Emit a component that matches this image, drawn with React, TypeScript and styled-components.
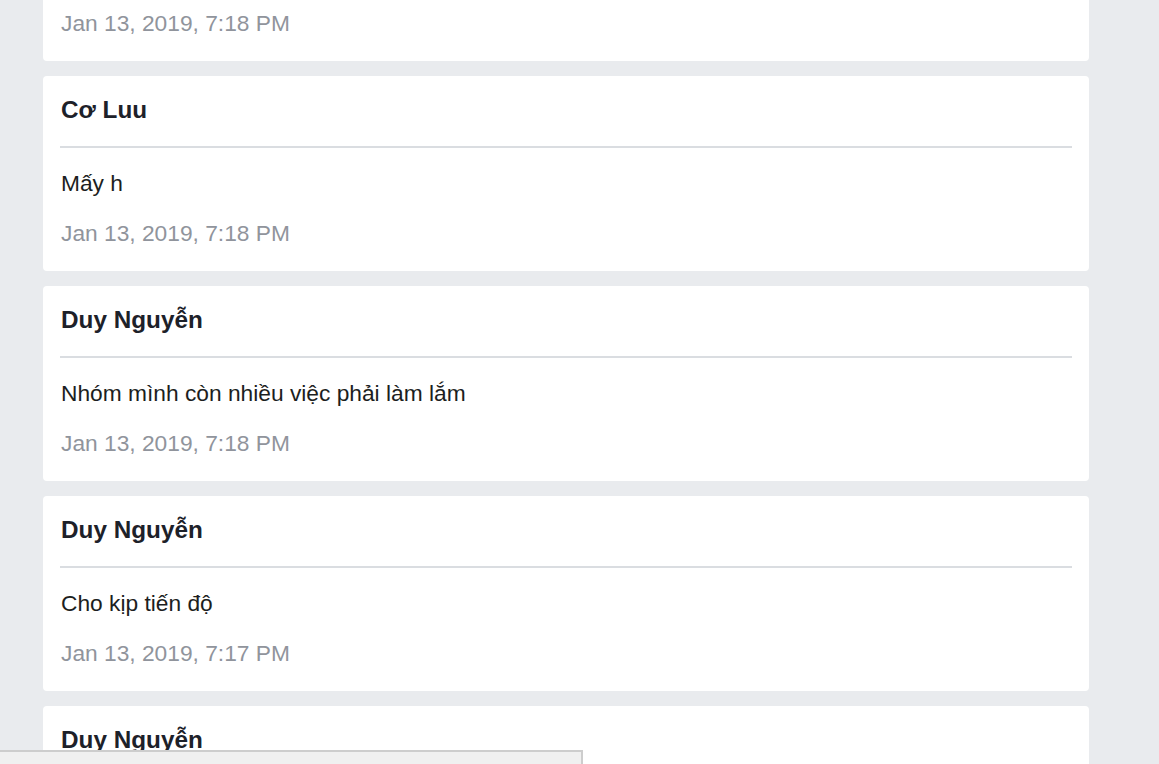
import React from "react";
import styled, { createGlobalStyle } from "styled-components";

const Global = createGlobalStyle`
  html, body {
    margin: 0;
    padding: 0;
    background: #e9ebee;
    font-family: "Liberation Sans", Arial, sans-serif;
    overflow: hidden;
  }
`;

const Page = styled.div`
  min-height: 764px;
  padding-left: 43px;
  background: #e9ebee;
`;

const Feed = styled.div`
  width: 1046px;
  margin-top: -134px;
  display: flex;
  flex-direction: column;
  gap: 15px;
`;

const Card = styled.div`
  background: #ffffff;
  border-radius: 4px;
  padding: 19px 17px 25px;
  display: flex;
  flex-direction: column;
`;

const Author = styled.div`
  font-size: 24.3px;
  line-height: 29px;
  font-weight: bold;
  color: #1d2129;
  padding-left: 1px;
`;

const Divider = styled.div`
  height: 2px;
  background: #dadde1;
  margin: 22px 0 22px;
`;

const Message = styled.div`
  font-size: 22.75px;
  line-height: 26px;
  color: #1c1e21;
  margin-bottom: 24px;
  padding-left: 1px;
`;

const Timestamp = styled.div`
  font-size: 22.75px;
  line-height: 26px;
  color: #90949c;
  padding-left: 1px;
`;

const Composer = styled.div`
  position: fixed;
  left: 0;
  top: 750px;
  width: 581px;
  height: 40px;
  background: #f0f0f0;
  border: 2px solid #cdcdcd;
  border-left: none;
`;

const posts = [
  { author: "Duy Nguyễn", text: "Ok", time: "Jan 13, 2019, 7:18 PM" },
  { author: "Cơ Luu", text: "Mấy h", time: "Jan 13, 2019, 7:18 PM" },
  {
    author: "Duy Nguyễn",
    text: "Nhóm mình còn nhiều việc phải làm lắm",
    time: "Jan 13, 2019, 7:18 PM",
  },
  { author: "Duy Nguyễn", text: "Cho kịp tiến độ", time: "Jan 13, 2019, 7:17 PM" },
  { author: "Duy Nguyễn", text: "Mọi người ơi", time: "Jan 13, 2019, 7:17 PM" },
];

export default function App() {
  return (
    <>
      <Global />
      <Page>
        <Feed>
          {posts.map((p, i) => (
            <Card key={i}>
              <Author>{p.author}</Author>
              <Divider />
              <Message>{p.text}</Message>
              <Timestamp>{p.time}</Timestamp>
            </Card>
          ))}
        </Feed>
      </Page>
      <Composer />
    </>
  );
}
